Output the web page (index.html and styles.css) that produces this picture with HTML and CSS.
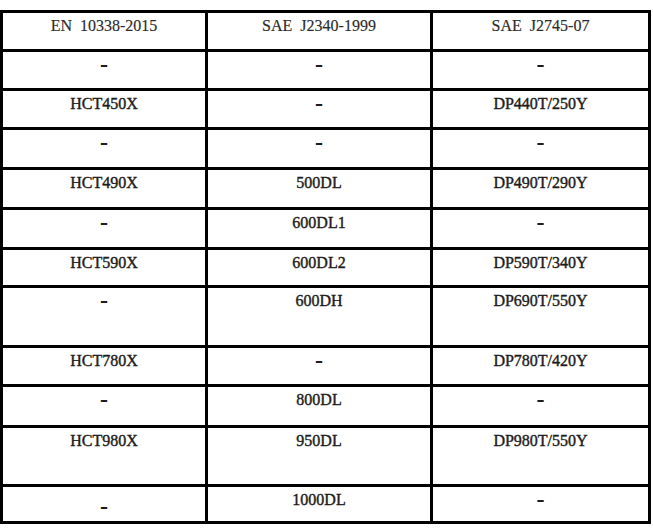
FILE: index.html
```html
<!DOCTYPE html>
<html lang="en">
<head>
<meta charset="utf-8">
<title>Steel grade comparison</title>
<link rel="stylesheet" href="styles.css">
</head>
<body>
<div class="grid">
  <div class="cell head">EN&nbsp; 10338-2015</div>
  <div class="cell head">SAE&nbsp; J2340-1999</div>
  <div class="cell head">SAE&nbsp; J2745-07</div>

  <div class="cell dash">–</div>
  <div class="cell dash">–</div>
  <div class="cell dash">–</div>

  <div class="cell">HCT450X</div>
  <div class="cell dash">–</div>
  <div class="cell">DP440T/250Y</div>

  <div class="cell dash">–</div>
  <div class="cell dash">–</div>
  <div class="cell dash">–</div>

  <div class="cell">HCT490X</div>
  <div class="cell">500DL</div>
  <div class="cell">DP490T/290Y</div>

  <div class="cell dash">–</div>
  <div class="cell">600DL1</div>
  <div class="cell dash">–</div>

  <div class="cell">HCT590X</div>
  <div class="cell">600DL2</div>
  <div class="cell">DP590T/340Y</div>

  <div class="cell dash">–</div>
  <div class="cell">600DH</div>
  <div class="cell">DP690T/550Y</div>

  <div class="cell">HCT780X</div>
  <div class="cell dash">–</div>
  <div class="cell">DP780T/420Y</div>

  <div class="cell dash">–</div>
  <div class="cell">800DL</div>
  <div class="cell dash">–</div>

  <div class="cell">HCT980X</div>
  <div class="cell">950DL</div>
  <div class="cell">DP980T/550Y</div>

  <div class="cell dash low">–</div>
  <div class="cell">1000DL</div>
  <div class="cell dash">–</div>
</div>
</body>
</html>
```

FILE: styles.css
```css
html, body {
  margin: 0;
  padding: 0;
  background: #ffffff;
}

body {
  padding-top: 10px;
  font-family: "Liberation Serif", "Times New Roman", serif;
  font-size: 16px;
  color: #1c1c1c;
}

.grid {
  display: grid;
  width: 651px;
  box-sizing: border-box;
  background: #000;
  padding: 3px;
  gap: 3px;
  grid-template-columns: 202px 222px 215px;
  grid-template-rows: 36px 36px 36px 37px 37px 37px 35px 57px 36px 38px 56px 34px;
}

.cell {
  background: #fff;
  text-align: center;
  line-height: 20px;
  padding-top: 3px;
  box-sizing: border-box;
  -webkit-text-stroke: 0.4px #1c1c1c;
}

.head {
  color: #2a2a2a;
  -webkit-text-stroke: 0.15px #2a2a2a;
}

.dash {
  font-family: "DejaVu Sans", sans-serif;
  font-weight: bold;
  -webkit-text-stroke: 0;
}

.low {
  padding-top: 10px;
}
```
